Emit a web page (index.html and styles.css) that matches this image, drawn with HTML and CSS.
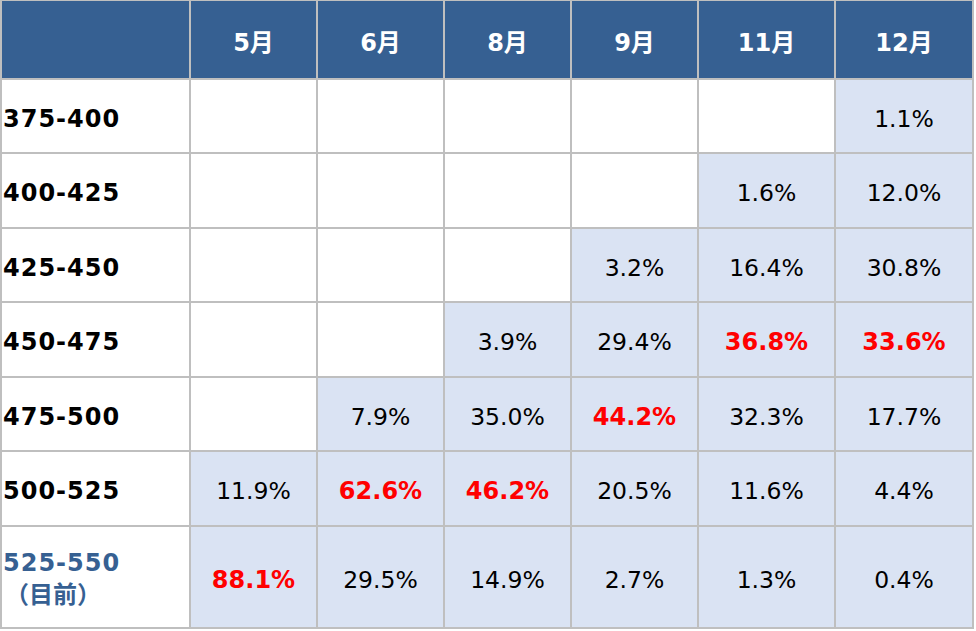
FILE: index.html
```html
<!DOCTYPE html>
<html lang="zh">
<head>
<meta charset="utf-8">
<title>Table</title>
<link rel="stylesheet" href="styles.css">
</head>
<body>
<div class="table">
  <div class="cell head"></div>
  <div class="cell head">5月</div>
  <div class="cell head">6月</div>
  <div class="cell head">8月</div>
  <div class="cell head">9月</div>
  <div class="cell head">11月</div>
  <div class="cell head">12月</div>

  <div class="cell label">375-400</div>
  <div class="cell"></div>
  <div class="cell"></div>
  <div class="cell"></div>
  <div class="cell"></div>
  <div class="cell"></div>
  <div class="cell val">1.1%</div>

  <div class="cell label">400-425</div>
  <div class="cell"></div>
  <div class="cell"></div>
  <div class="cell"></div>
  <div class="cell"></div>
  <div class="cell val">1.6%</div>
  <div class="cell val">12.0%</div>

  <div class="cell label">425-450</div>
  <div class="cell"></div>
  <div class="cell"></div>
  <div class="cell"></div>
  <div class="cell val">3.2%</div>
  <div class="cell val">16.4%</div>
  <div class="cell val">30.8%</div>

  <div class="cell label">450-475</div>
  <div class="cell"></div>
  <div class="cell"></div>
  <div class="cell val">3.9%</div>
  <div class="cell val">29.4%</div>
  <div class="cell val hot">36.8%</div>
  <div class="cell val hot">33.6%</div>

  <div class="cell label">475-500</div>
  <div class="cell"></div>
  <div class="cell val">7.9%</div>
  <div class="cell val">35.0%</div>
  <div class="cell val hot">44.2%</div>
  <div class="cell val">32.3%</div>
  <div class="cell val">17.7%</div>

  <div class="cell label">500-525</div>
  <div class="cell val">11.9%</div>
  <div class="cell val hot">62.6%</div>
  <div class="cell val hot">46.2%</div>
  <div class="cell val">20.5%</div>
  <div class="cell val">11.6%</div>
  <div class="cell val">4.4%</div>

  <div class="cell label current"><span>525-550</span><span class="cjk">（目前）</span></div>
  <div class="cell val hot">88.1%</div>
  <div class="cell val">29.5%</div>
  <div class="cell val">14.9%</div>
  <div class="cell val">2.7%</div>
  <div class="cell val">1.3%</div>
  <div class="cell val">0.4%</div>
</div>
</body>
</html>
```

FILE: styles.css
```css
html, body {
  margin: 0;
  padding: 0;
  background: #ffffff;
}

body {
  font-family: "DejaVu Sans", "Noto Sans CJK SC", sans-serif;
}

.table {
  display: grid;
  width: 974px;
  box-sizing: border-box;
  grid-template-columns: 187px 125px 125px 125px 125px 135px 136px;
  grid-template-rows: 77px 72px 73px 72px 73px 72px 73px 100px;
  gap: 2px;
  padding: 1px 2px 2px 2px;
  background: #bfbfbf;
}

.cell {
  background: #ffffff;
  display: flex;
  align-items: center;
  justify-content: center;
  font-size: 23.5px;
  color: #000000;
  padding-top: 5px;
  box-sizing: border-box;
}

.head {
  background: #366092;
  color: #ffffff;
  font-weight: bold;
  font-size: 24px;
  padding-top: 1px;
}

.label {
  justify-content: flex-start;
  padding-left: 1px;
  font-weight: bold;
  font-size: 24px;
  letter-spacing: 1px;
}

.val {
  background: #dae3f3;
}

.hot {
  color: #ff0000;
  font-weight: bold;
  font-size: 24px;
}

.current {
  flex-direction: column;
  align-items: flex-start;
  justify-content: center;
  color: #366092;
  line-height: 30px;
  padding-top: 2px;
}

.cjk {
  font-family: "Noto Sans CJK SC", sans-serif;
  font-size: 24px;
  letter-spacing: 0;
  margin-left: 2px;
}
```
